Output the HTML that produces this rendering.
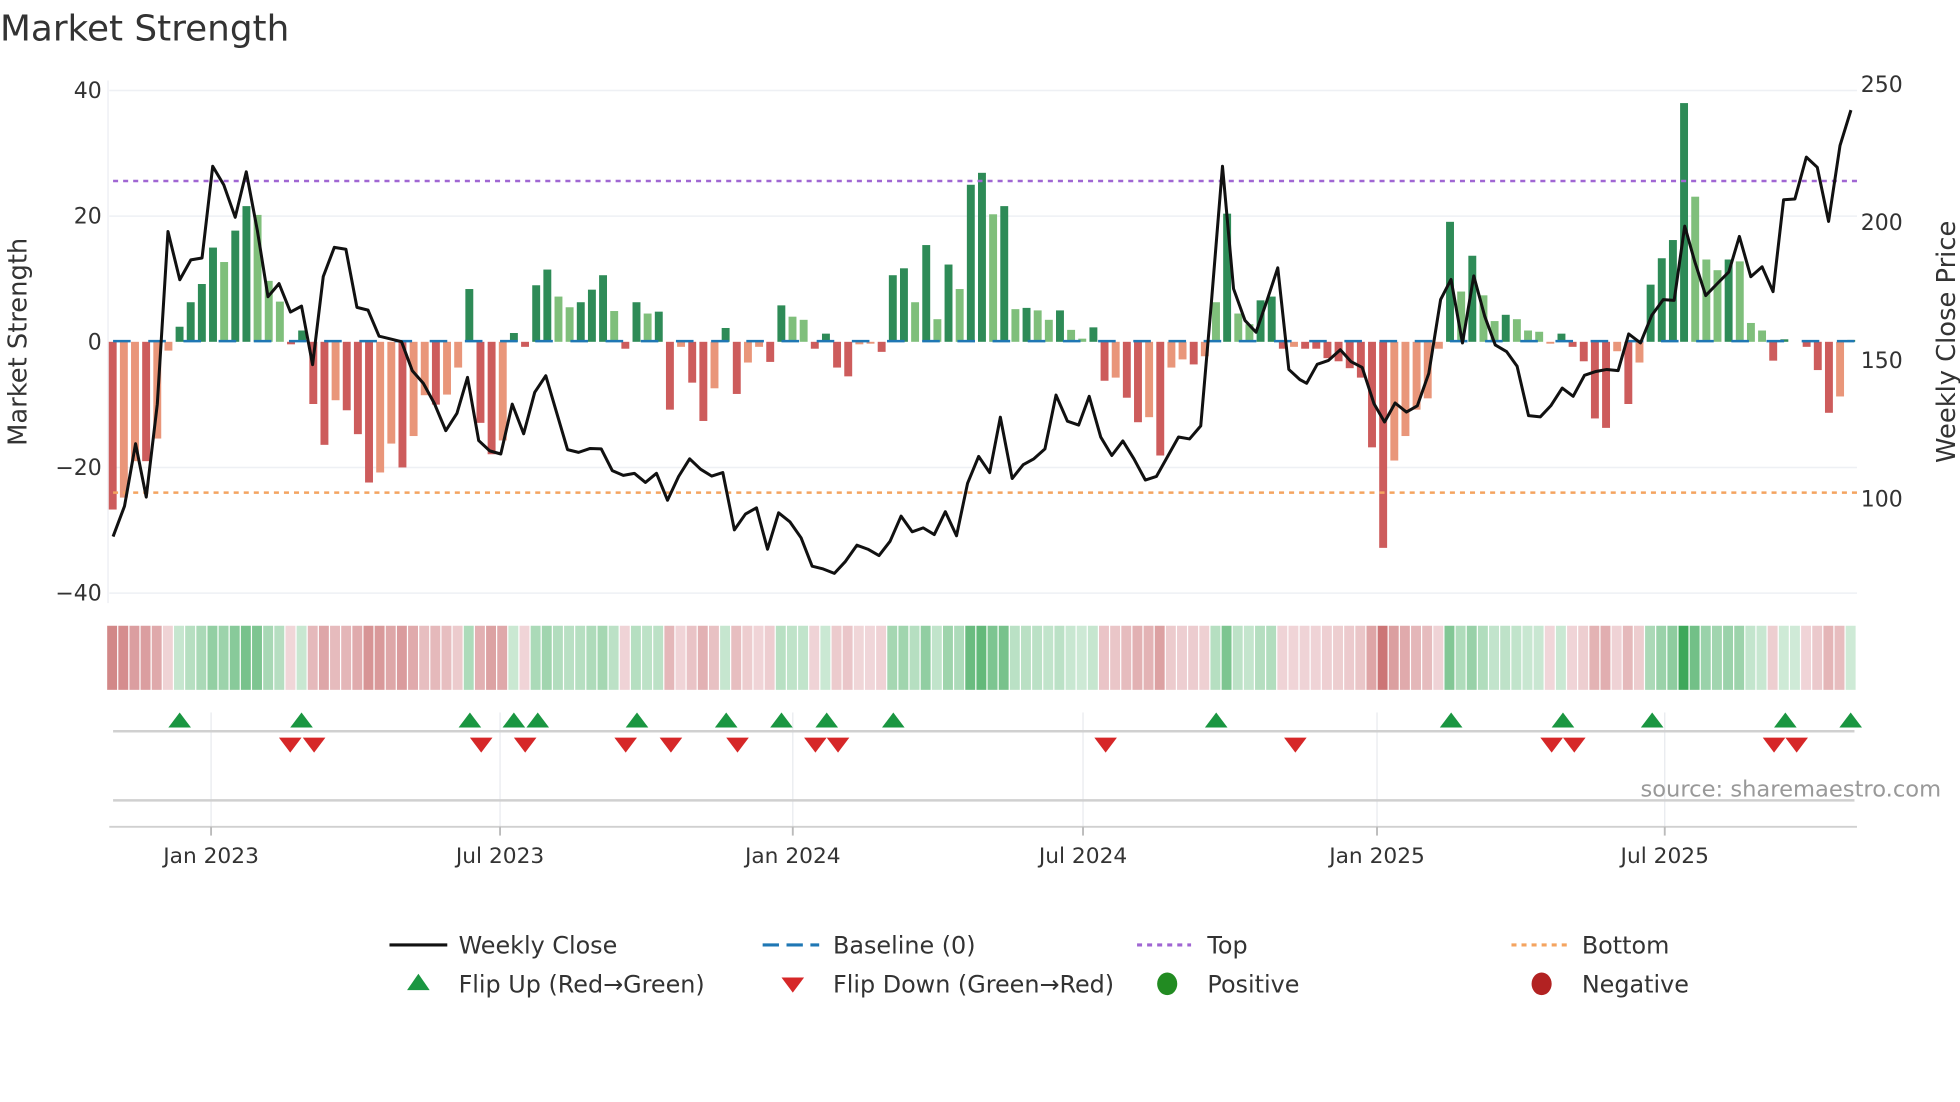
<!DOCTYPE html>
<html><head><meta charset="utf-8"><style>
html,body{margin:0;padding:0;background:#fff;}
svg{display:block;font-family:"DejaVu Sans","Liberation Sans",sans-serif;}
</style></head><body>
<svg id="s" width="1960" height="1102" viewBox="0 0 1560 877" xmlns="http://www.w3.org/2000/svg">
<rect width="1560" height="877" fill="#fff"/>
<text x="0" y="32" font-size="28.5" fill="#333">Market Strength</text>
<g stroke="#eef0f4" stroke-width="1.2">
<line x1="87" y1="72" x2="1478" y2="72"/><line x1="87" y1="172" x2="1478" y2="172"/>
<line x1="87" y1="372" x2="1478" y2="372"/><line x1="87" y1="472" x2="1478" y2="472"/>
<line x1="86" y1="64" x2="86" y2="480"/>
</g>
<g font-size="17.5" fill="#333" text-anchor="end">
<text x="81" y="78">40</text><text x="81" y="178">20</text><text x="81" y="278">0</text>
<text x="81" y="378">−20</text><text x="81" y="478">−40</text>
</g>
<g font-size="17.5" fill="#333">
<text x="1481" y="73">250</text><text x="1481" y="183">200</text><text x="1481" y="293">150</text><text x="1481" y="403">100</text>
</g>
<text transform="translate(21,272) rotate(-90)" font-size="20.5" fill="#333" text-anchor="middle">Market Strength</text>
<text transform="translate(1556,272) rotate(-90)" font-size="20.5" fill="#333" text-anchor="middle">Weekly Close Price</text>
<g id="bars"></g>
<line x1="90" y1="271.5" x2="1478" y2="271.5" stroke="#1f77b4" stroke-width="2" stroke-dasharray="14 14"/>
<line x1="90" y1="144" x2="1478" y2="144" stroke="#a066d3" stroke-width="2" stroke-dasharray="4 4"/>
<line x1="90" y1="392" x2="1478" y2="392" stroke="#f4a460" stroke-width="2" stroke-dasharray="4 4"/>
<polyline id="pl" fill="none" stroke="#111" stroke-width="2.4" stroke-linejoin="round"/>
<g id="heat"></g>
<g stroke="#e8eaee" stroke-width="1">
<line x1="168" y1="567" x2="168" y2="658"/><line x1="398" y1="567" x2="398" y2="658"/>
<line x1="631" y1="567" x2="631" y2="658"/><line x1="862" y1="567" x2="862" y2="658"/>
<line x1="1096" y1="567" x2="1096" y2="658"/><line x1="1325" y1="567" x2="1325" y2="658"/>
</g>
<line x1="90" y1="582" x2="1476" y2="582" stroke="#d0d0d0" stroke-width="2"/>
<line x1="90" y1="637" x2="1476" y2="637" stroke="#d0d0d0" stroke-width="2"/>
<line x1="87" y1="658" x2="1478" y2="658" stroke="#d0d0d0" stroke-width="1.5"/>
<g stroke="#bbb" stroke-width="1.5">
<line x1="168" y1="658" x2="168" y2="665"/><line x1="398" y1="658" x2="398" y2="665"/>
<line x1="631" y1="658" x2="631" y2="665"/><line x1="862" y1="658" x2="862" y2="665"/>
<line x1="1096" y1="658" x2="1096" y2="665"/><line x1="1325" y1="658" x2="1325" y2="665"/>
</g>
<g font-size="17.3" fill="#333" text-anchor="middle">
<text x="168" y="687">Jan 2023</text><text x="398" y="687">Jul 2023</text><text x="631" y="687">Jan 2024</text>
<text x="862" y="687">Jul 2024</text><text x="1096" y="687">Jan 2025</text><text x="1325" y="687">Jul 2025</text>
</g>
<g id="flips"></g>
<text x="1545" y="634" font-size="18" fill="#999" text-anchor="end">source: sharemaestro.com</text>
<g font-size="19" fill="#333">
<line x1="310" y1="752" x2="356" y2="752" stroke="#111" stroke-width="2.5"/>
<text x="365" y="759">Weekly Close</text>
<line x1="607" y1="752" x2="652" y2="752" stroke="#1f77b4" stroke-width="2.5" stroke-dasharray="13 6"/>
<text x="663" y="759">Baseline (0)</text>
<line x1="905" y1="752" x2="948" y2="752" stroke="#a066d3" stroke-width="2.5" stroke-dasharray="4 4"/>
<text x="961" y="759">Top</text>
<line x1="1203" y1="752" x2="1247" y2="752" stroke="#f4a460" stroke-width="2.5" stroke-dasharray="4 4"/>
<text x="1259" y="759">Bottom</text>
<polygon points="324,788 342,788 333,775" fill="#1a9641"/>
<text x="365" y="790">Flip Up (Red→Green)</text>
<polygon points="622,778 640,778 631,790" fill="#d62728"/>
<text x="663" y="790">Flip Down (Green→Red)</text>
<ellipse cx="929" cy="783" rx="8" ry="9" fill="#228b22"/>
<text x="961" y="790">Positive</text>
<ellipse cx="1227" cy="783" rx="8" ry="9" fill="#b22222"/>
<text x="1259" y="790">Negative</text>
</g>
</svg>
<script>
var NS="http://www.w3.org/2000/svg";
function el(t,a,p){var e=document.createElementNS(NS,t);for(var k in a)e.setAttribute(k,a[k]);p.appendChild(e);return e;}
var B="R-26.7 S-24.8 S-19 R-19 S-15.4 S-1.4 D2.4 D6.3 D9.2 D15 L12.7 D17.7 D21.6 L20.2 L9.7 L6.4 R-0.4 D1.8 R-9.9 R-16.4 S-9.3 R-10.9 R-14.7 R-22.4 S-20.8 S-16.2 R-20 S-15 S-8.5 R-10 S-8.4 S-4.1 D8.4 R-12.9 R-17.9 S-15.7 D1.4 R-0.8 D9 D11.5 L7.2 L5.5 D6.3 D8.3 D10.6 L4.9 R-1.1 D6.3 L4.5 D4.8 R-10.8 S-0.8 R-6.5 R-12.6 S-7.4 D2.2 R-8.3 S-3.3 S-0.8 R-3.2 D5.8 L4 L3.5 R-1.1 D1.3 R-4.1 R-5.5 S-0.4 S-0.3 R-1.6 D10.6 D11.7 L6.3 D15.4 L3.6 D12.3 L8.4 D25 D26.9 L20.3 D21.6 L5.2 D5.4 L5 L3.5 D5 L1.9 L0.5 D2.3 R-6.2 S-5.7 R-8.9 R-12.8 S-12 R-18.1 S-4.1 S-2.8 R-3.6 S-2.3 L6.3 D20.4 L4.5 L2.8 D6.6 D7.2 R-1.1 S-0.8 R-1.1 R-1.1 R-2.6 R-3.1 R-4.2 R-5.7 R-16.8 R-32.8 S-18.9 S-15 S-10.8 S-9 S-1.1 D19.1 L8 D13.7 L7.4 L3.3 D4.3 L3.6 L1.8 L1.6 S-0.3 D1.3 R-0.8 R-3.1 R-12.2 R-13.7 S-1.5 R-9.9 S-3.3 D9.1 D13.3 D16.2 D38 L23.1 L13.1 L11.4 D13.1 L12.8 L3 L1.8 R-3 D0.4 L0 R-0.8 R-4.5 R-11.3 S-8.7 D0.3".split(" ");
var col={D:"#2e8b57",L:"#7fbf7b",R:"#cd5c5c",S:"#e9967a"};
var gb=document.getElementById("bars"),gh=document.getElementById("heat");
function lerp(a,b,t){return "rgb("+a.map(function(x,i){return Math.round(x+(b[i]-x)*t)}).join(",")+")";}
B.forEach(function(s,i){
 var t=s[0],v=parseFloat(s.slice(1)),cx=89.7+i*8.87,y0=272,h=v*5;
 if(Math.abs(v)>0.05) el("rect",{x:cx-3.15,y:h>0?y0-h:y0,width:6.3,height:Math.max(Math.abs(h),1.2),fill:col[t]},gb);
 var k=Math.min(1,0.08+0.92*Math.abs(v)/36);
 var c=v>=0?lerp([220,240,226],[62,168,90],k):lerp([244,224,227],[200,108,108],k);
 el("rect",{x:cx-4.4,y:498,width:7.9,height:51,fill:c},gh);
});
var p3=[[33,1155],[62,1078],[90,920],[117,1055],[145,820],[172,383],[202,505],[230,455],[258,450],[285,218],[313,265],[342,347],[370,232],[398,380],[425,548],[453,515],[482,587],[510,572],[538,720],[565,497],[593,423],[622,428],[650,575],[678,582],[706,648],[735,655],[763,662],[790,735],[818,767],[846,818],[875,887],[903,843],[930,752],[958,912],[986,938],[1014,946],[1043,820],[1072,895],[1100,790],[1128,748],[1155,840],[1183,935],[1211,942],[1240,932],[1268,933],[1296,988],[1324,1000],[1352,995],[1380,1018],[1408,995],[1436,1063],[1464,1003],[1492,958],[1520,985],[1548,1002]];
var p4=[[30,1002],[58,993],[87,1138],[115,1098],[143,1082],[171,1187],[199,1095],[228,1118],[256,1158],[284,1230],[312,1237],[340,1248],[368,1218],[397,1177],[425,1187],[453,1203],[481,1167],[509,1103],[537,1143],[565,1133],[593,1150],[621,1092],[649,1153],[677,1020],[705,952],[733,993],[760,853],[790,1008],[818,973],[845,958],[873,933],[901,797],[930,863],[958,873],[985,800],[1014,903],[1042,950],[1070,913],[1098,958],[1127,1012],[1155,1003],[1183,953],[1211,903],[1239,908],[1267,875],[1294,565],[1322,218],[1350,528],[1379,608],[1407,638],[1435,557],[1462,475],[1490,732],[1518,758]];
var p5=[[0,760],[25,712],[52,702],[80,675],[105,705],[132,720],[160,812],[185,858],[210,810],[237,833],[263,817],[290,735],[318,548],[343,497],[370,658],[397,488],[423,590],[448,663],[475,680],[500,717],[527,842],[555,845],[580,817],[607,772],[633,793],[660,740],[687,730],[713,725],[740,728],[765,635],[793,658],[820,588],[847,548],[873,550],[898,362],[922,452],[948,538],[975,508],[1003,478],[1028,388],[1055,490],[1082,465],[1108,528],[1133,295],[1160,293],[1187,187],[1213,213],[1240,350],[1267,158],[1293,68]];
var pts=[];
p3.forEach(function(p){pts.push([p[0]/3.179+79.6,p[1]/3.179+63.7]);});
p4.forEach(function(p){pts.push([p[0]/3.179+557.1,p[1]/3.179+63.7]);});
p5.forEach(function(p){pts.push([1102+(p[0]-185)/2.985,272+(p[1]-655)*0.3142]);});
document.getElementById("pl").setAttribute("points",pts.map(function(p){return p[0].toFixed(1)+","+p[1].toFixed(1)}).join(" "));
var gf=document.getElementById("flips");
[143,240,374,409,428,507,578,622,658,711,968,1155,1244,1315,1421,1473].forEach(function(x){
 el("polygon",{points:(x-9)+",579 "+(x+9)+",579 "+x+",567",fill:"#1a9641"},gf);});
[231,250,383,418,498,534,587,649,667,880,1031,1235,1253,1412,1430].forEach(function(x){
 el("polygon",{points:(x-9)+",587 "+(x+9)+",587 "+x+",599",fill:"#d62728"},gf);});
</script>
</body></html>
